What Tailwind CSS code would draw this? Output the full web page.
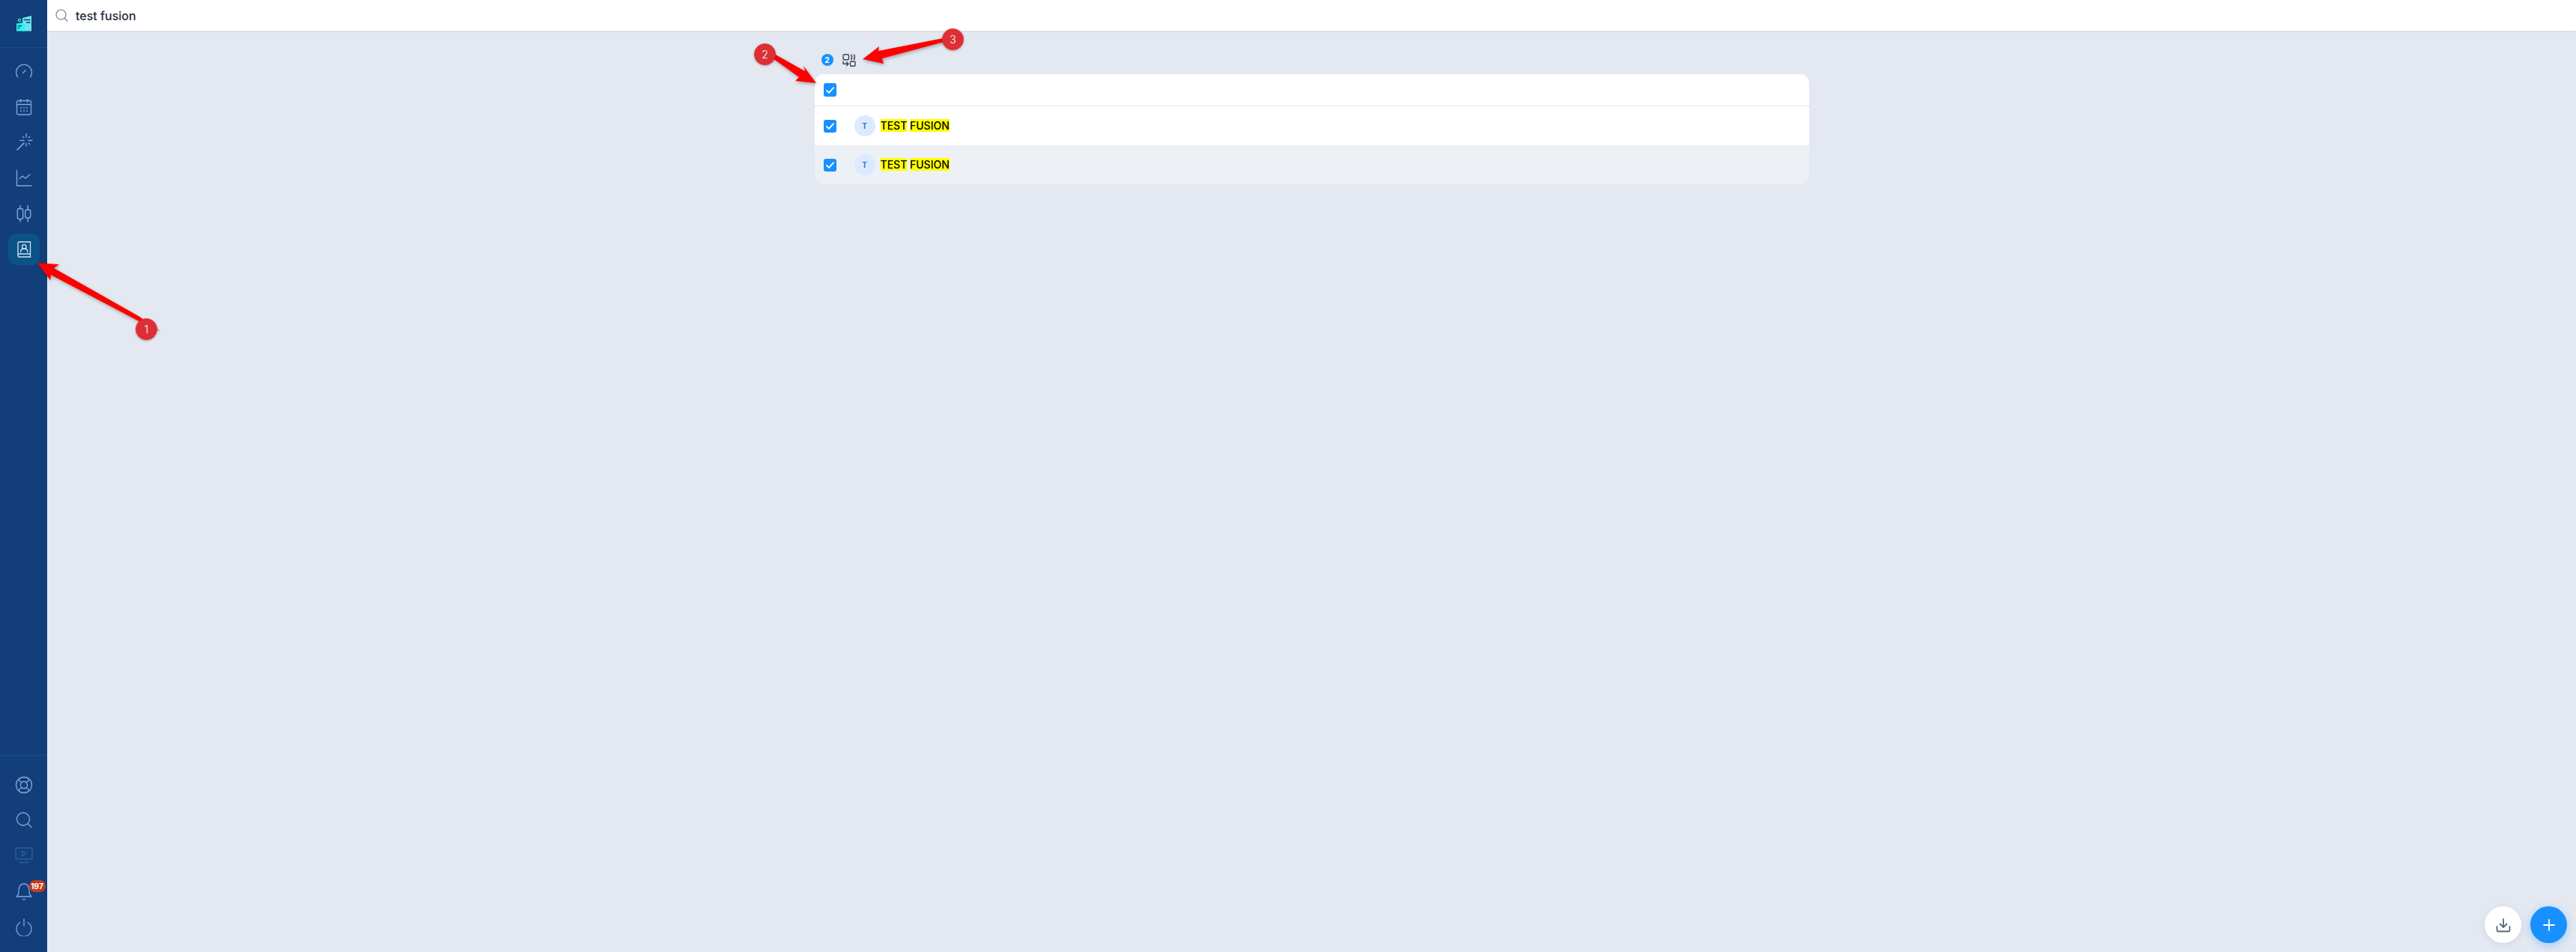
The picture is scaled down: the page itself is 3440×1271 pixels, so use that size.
<!DOCTYPE html>
<html lang="en">
<head>
  <meta charset="UTF-8">
  <meta name="viewport" content="width=device-width, initial-scale=1.0">
  <title>Contacts</title>
  <script src="https://cdn.jsdelivr.net/npm/@tailwindcss/browser@4"></script>
</head>
<body class="bg-[#e4e8f1] font-['Inter',sans-serif] overflow-hidden">
  <div class="relative flex h-[1271px] w-[3440px]">

    <!-- Sidebar -->
    <aside class="flex w-[63px] shrink-0 flex-col bg-[#123f79] text-[#7fa8dc]">
      <div class="flex h-[64px] items-start justify-center border-b border-[#0f5286] pt-[21px]">
        <svg width="20" height="21" viewBox="0 0 20 21">
          <path d="M8 3 L20 0 V20.500 H8 Z" fill="#6fe3ee"/>
          <path d="M9.500 5.500 H18.500 M13 9 H18.500" stroke="#123f79" stroke-width="1.300"/>
          <path d="M0 10.500 L11 9 V20.500 H0 Z" fill="#2ff2ee"/>
          <path d="M1.500 13.500 H7 M1.500 16.500 H4" stroke="#123f79" stroke-width="1.300"/>
          <circle cx="4" cy="6" r="1.600" fill="none" stroke="#2ff2ee" stroke-width="1.200"/>
        </svg>
      </div>
      <nav class="flex flex-col items-center gap-[5.6px] pt-[10px]">
        <a class="flex h-[42px] w-[42px] items-center justify-center">
          <svg width="24" height="24" viewBox="0 0 24 24" fill="none" stroke="currentColor" stroke-width="1.300" stroke-linecap="round"><path d="M3.600 20 A10.500 10.500 0 1 1 20.400 20"/><path d="M10.500 14.500 L14 11"/></svg>
        </a>
        <a class="flex h-[42px] w-[42px] items-center justify-center">
          <svg width="24" height="24" viewBox="0 0 24 24" fill="none" stroke="currentColor" stroke-width="1.300" stroke-linecap="round"><rect x="2.500" y="3.500" width="19" height="18.500" rx="2"/><path d="M7.500 1.500 V5.500 M16.500 1.500 V5.500 M2.500 8.500 H21.500"/><path d="M8 13 h.1 M12 13 h.1 M16 13 h.1 M8 17 h.1 M12 17 h.1 M16 17 h.1" stroke-width="1.800"/></svg>
        </a>
        <a class="flex h-[42px] w-[42px] items-center justify-center">
          <svg width="24" height="24" viewBox="0 0 24 24" fill="none" stroke="currentColor" stroke-width="1.300" stroke-linecap="round"><path d="M3 22 L12 13" stroke-width="1.700"/><path d="M15 0.500 V5 M15 13.500 V17 M7 9.500 H12 M18 9.500 H23 M10.500 4.500 L11.800 5.800 M19.500 4.500 L18.200 5.800 M19.500 14.500 L18.200 13.200"/></svg>
        </a>
        <a class="flex h-[42px] w-[42px] items-center justify-center">
          <svg width="24" height="24" viewBox="0 0 24 24" fill="none" stroke="currentColor" stroke-width="1.300" stroke-linecap="round" stroke-linejoin="round"><path d="M2.500 1.500 V22 H22"/><path d="M6 12.500 L10 9 L14 12 L20 7"/></svg>
        </a>
        <a class="flex h-[42px] w-[42px] items-center justify-center">
          <svg width="24" height="24" viewBox="0 0 24 24" fill="none" stroke="currentColor" stroke-width="1.400" stroke-linecap="round"><rect x="3.300" y="5.500" width="7.400" height="14" rx="2.500"/><rect x="13.700" y="7" width="7" height="11" rx="2.500"/><path d="M7 1.500 V5.500 M7 19.500 V23 M17.200 1.500 V7 M17.200 18 V23"/></svg>
        </a>
        <a class="flex h-[42px] w-[42px] items-center justify-center rounded-[10px] bg-[#0a5288] text-[#d5e3f3]">
          <svg width="24" height="24" viewBox="0 0 24 24" fill="none" stroke="currentColor" stroke-width="1.300" stroke-linecap="round"><path d="M4 21 V3.500 Q4 2 5.500 2 H20.500 V22 H5.500 Q4 22 4 20.500 Q4 18 6 18 H20.500"/><circle cx="12.300" cy="8.500" r="2.800"/><path d="M7.500 15.500 Q7.500 11 12.300 11 Q17 11 17 15.500"/></svg>
        </a>
      </nav>

      <div class="mt-auto flex flex-col items-center gap-[5px] border-t border-[#0f5286] pb-[12px] pt-[18px]">
        <a class="flex h-[42px] w-[42px] items-center justify-center">
          <svg width="24" height="24" viewBox="0 0 24 24" fill="none" stroke="currentColor" stroke-width="1.300"><circle cx="12" cy="12" r="10.500"/><circle cx="12" cy="12" r="4.500"/><path d="M4.600 4.600 L8.800 8.800 M19.400 4.600 L15.200 8.800 M4.600 19.400 L8.800 15.200 M19.400 19.400 L15.200 15.200"/></svg>
        </a>
        <a class="flex h-[42px] w-[42px] items-center justify-center">
          <svg width="24" height="24" viewBox="0 0 24 24" fill="none" stroke="currentColor" stroke-width="1.300" stroke-linecap="round"><circle cx="11" cy="10.500" r="8.500"/><path d="M17.500 17 L22 21.500"/></svg>
        </a>
        <a class="flex h-[42px] w-[42px] items-center justify-center text-[#2e5f97]">
          <svg width="24" height="24" viewBox="0 0 24 24" fill="none" stroke="currentColor" stroke-width="1.300" stroke-linecap="round" stroke-linejoin="round"><rect x="1" y="2" width="22" height="15" rx="2"/><path d="M9.500 6 L15 9.500 L9.500 13 Z"/><path d="M6.500 21.500 H17.500"/></svg>
        </a>
        <a class="relative mt-[1px] flex h-[42px] w-[42px] items-center justify-center">
          <svg width="24" height="24" viewBox="0 0 24 24" fill="none" stroke="currentColor" stroke-width="1.300" stroke-linecap="round" stroke-linejoin="round"><path d="M2 19 H22 Q18.500 16.500 19 10.500 Q18.500 2 12 2 Q5.500 2 5 10.500 Q5.500 16.500 2 19 Z"/><path d="M10.500 22.500 Q12 23.500 13.500 22.500"/></svg>
          <span class="absolute left-[28px] top-[6px] flex h-[16px] w-[22px] items-center justify-center rounded-full bg-[#c43a1e] text-[10px] font-bold leading-none text-white">197</span>
        </a>
        <a class="mt-[1px] flex h-[42px] w-[42px] items-center justify-center">
          <svg width="24" height="24" viewBox="0 0 24 24" fill="none" stroke="currentColor" stroke-width="1.300" stroke-linecap="round"><path d="M7 5.500 A10 10 0 1 0 17 5.500"/><path d="M12 1 V10"/></svg>
        </a>
      </div>
    </aside>

    <!-- Main -->
    <main class="flex min-w-0 flex-1 flex-col">
      <header class="flex h-[41px] items-center bg-white pl-[11px] shadow-[0_1px_2px_rgba(30,40,80,0.08)]">
        <svg width="17" height="17" viewBox="0 0 17 17" fill="none" stroke="#6b7f96" stroke-width="1.200" stroke-linecap="round"><circle cx="7.500" cy="7.500" r="6.500"/><path d="M12.500 12.500 L16 16"/></svg>
        <span class="ml-[10px] text-[16px] font-medium text-[#1f2d3d]">test fusion</span>
      </header>

      <section class="mx-auto w-[1328px]">
        <div class="flex h-[58px] items-start gap-[12px] pl-[9px] pt-[31px]">
          <span class="flex h-[16px] w-[16px] items-center justify-center rounded-full bg-[#1890ff] text-[10px] font-bold text-white">2</span>
          <svg width="18" height="17" viewBox="0 0 18 17" fill="none" stroke="#3c4450" stroke-width="1.400" stroke-linecap="round" stroke-linejoin="round">
            <rect x="1" y="0.800" width="7.500" height="7" rx="1.500"/>
            <path d="M11.800 1 Q13.500 4.300 11.800 7.800 M15.500 1 Q17.200 4.300 15.500 7.800"/>
            <rect x="10.500" y="10" width="6.500" height="6.200" rx="1.200"/>
            <path d="M1 10 V13.300 H8 M5.500 10.800 L8 13.300 L5.500 15.800"/>
          </svg>
        </div>

        <div class="flex h-[42px] items-center rounded-t-[12px] bg-white pl-[12px]">
          <span class="flex h-[18px] w-[17px] items-center justify-center rounded-[3px] bg-[#1890ff]">
            <svg width="11" height="9" viewBox="0 0 11 9" fill="none" stroke="white" stroke-width="1.800" stroke-linecap="round" stroke-linejoin="round"><path d="M1 5 L4 7.800 L10 1.200"/></svg>
          </span>
        </div>

        <div class="mt-[1px] overflow-hidden rounded-t-[4px] rounded-b-[12px]">
          <div class="flex h-[52px] items-center bg-white pl-[12px]">
            <span class="flex h-[17px] w-[17px] items-center justify-center rounded-[3px] bg-[#1890ff]">
              <svg width="11" height="9" viewBox="0 0 11 9" fill="none" stroke="white" stroke-width="1.800" stroke-linecap="round" stroke-linejoin="round"><path d="M1 5 L4 7.800 L10 1.200"/></svg>
            </span>
            <span class="ml-[24px] flex h-[28px] w-[28px] items-center justify-center rounded-full bg-[#dbeafe] text-[10px] font-semibold text-[#2563c9]">T</span>
            <span class="ml-[7px] text-[14px] font-medium leading-[16px] text-black"><span class="bg-[#ffff00]">TEST</span> <span class="bg-[#ffff00]">FUSION</span></span>
          </div>
          <div class="flex h-[52px] items-center bg-[#edf0f4] pl-[12px]">
            <span class="flex h-[17px] w-[17px] items-center justify-center rounded-[3px] bg-[#1890ff]">
              <svg width="11" height="9" viewBox="0 0 11 9" fill="none" stroke="white" stroke-width="1.800" stroke-linecap="round" stroke-linejoin="round"><path d="M1 5 L4 7.800 L10 1.200"/></svg>
            </span>
            <span class="ml-[24px] flex h-[28px] w-[28px] items-center justify-center rounded-full bg-[#dbeafe] text-[10px] font-semibold text-[#2563c9]">T</span>
            <span class="ml-[7px] text-[14px] font-medium leading-[16px] text-black"><span class="bg-[#ffff00]">TEST</span> <span class="bg-[#ffff00]">FUSION</span></span>
          </div>
        </div>
      </section>
    </main>

    <!-- Floating buttons -->
    <div class="absolute bottom-[12px] right-[12px] flex gap-[12px]">
      <button class="flex h-[49px] w-[49px] items-center justify-center rounded-full bg-white shadow-[0_2px_8px_rgba(60,80,130,0.12)]">
        <svg width="20" height="20" viewBox="0 0 20 20" fill="none" stroke="#56687e" stroke-width="1.800" stroke-linecap="round" stroke-linejoin="round"><path d="M10 2 V12.500 M5.500 8.500 L10 13 L14.500 8.500"/><path d="M1.500 12 V17 Q1.500 18.500 3 18.500 H17 Q18.500 18.500 18.500 17 V12"/></svg>
      </button>
      <button class="flex h-[49px] w-[49px] items-center justify-center rounded-full bg-[#1890ff] shadow-[0_3px_12px_rgba(24,144,255,0.35)]">
        <svg width="16" height="16" viewBox="0 0 16 16" fill="none" stroke="white" stroke-width="1.800" stroke-linecap="round"><path d="M8 1 V15 M1 8 H15"/></svg>
      </button>
    </div>

    <!-- Screenshot annotations -->
    <svg class="pointer-events-none absolute left-0 top-0 drop-shadow-[1px_2px_2px_rgba(0,0,0,0.3)]" width="3440" height="1271" viewBox="0 0 3440 1271">
      <path d="M50 351 L79 353 L72 358 L185 422 L214 442 L184 428 L68 367 L67 374 Z" fill="#ff0000"/>
      <path d="M1090 111 L1062 108 L1067 103 L1028 75 L1034 72 L1075 95 L1073 88 Z" fill="#ff0000"/>
      <path d="M1152 79 L1174 62 L1173 68 L1262 50.500 L1267 53 L1262 55.500 L1178 78 L1180 85 Z" fill="#ff0000"/>
    </svg>
    <span class="absolute left-[181px] top-[425px] flex h-[29px] w-[29px] items-center justify-center rounded-full border border-[#ee2b2f] bg-[#dc2f36] text-[14px] font-light text-white shadow-[0_1px_3px_rgba(0,0,0,0.3)]">1</span>
    <span class="absolute left-[1007px] top-[58px] flex h-[29px] w-[29px] items-center justify-center rounded-full border border-[#ee2b2f] bg-[#dc2f36] text-[14px] font-light text-white shadow-[0_1px_3px_rgba(0,0,0,0.3)]">2</span>
    <span class="absolute left-[1258px] top-[38px] flex h-[29px] w-[29px] items-center justify-center rounded-full border border-[#ee2b2f] bg-[#dc2f36] text-[14px] font-light text-white shadow-[0_1px_3px_rgba(0,0,0,0.3)]">3</span>
  </div>
</body>
</html>
